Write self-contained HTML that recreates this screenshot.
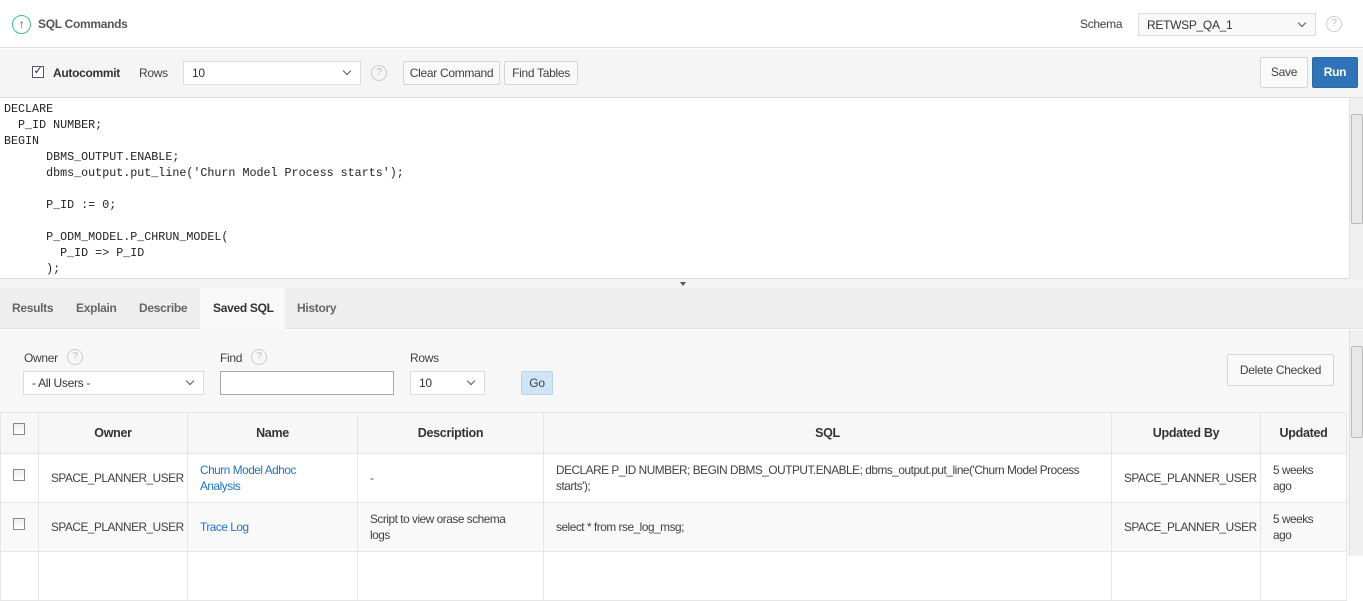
<!DOCTYPE html>
<html><head><meta charset="utf-8"><style>
*{box-sizing:border-box;margin:0;padding:0}
body{width:1363px;height:556px;overflow:hidden;background:#fff;font-family:"Liberation Sans",sans-serif;font-size:12px;color:#404040;letter-spacing:-0.3px;position:relative}
.a{position:absolute}
.sel{position:absolute;background:#f9f9f9;border:1px solid #dcdcdc;padding-left:8px;line-height:22px;color:#333}
.sel:after{content:"";position:absolute;right:10px;top:6px;width:5px;height:5px;border-right:1px solid #555;border-bottom:1px solid #555;transform:rotate(45deg)}
.btn{position:absolute;background:#f9f9f9;border:1px solid #d6d6d6;text-align:center;color:#404040;border-radius:2px}
.help{position:absolute;width:16px;height:16px;border:1px solid #ccc;border-radius:50%;color:#bbb;font-size:10px;text-align:center;line-height:14px}
pre{font-family:"Liberation Mono",monospace;font-size:11.7px;line-height:16px;color:#222;letter-spacing:0}
.cb{position:absolute;width:12px;height:12px;border:1px solid #888;background:linear-gradient(#eee,#fff)}
table{position:absolute;left:0;top:412px;width:1346px;border-collapse:collapse;table-layout:fixed}
td,th{border:1px solid #e6e6e6;padding:0 12px;text-align:left;vertical-align:middle;line-height:16px;white-space:nowrap}
td{font-size:11.8px;letter-spacing:-0.45px}
th{height:41px;text-align:center;font-weight:bold;color:#333;background:#f7f7f7;font-size:12.5px}
td{height:49px}
a{color:#1a73c9;text-decoration:none}
.vs{position:absolute;right:0;width:14px;background:#f0f0f0;border-left:1px solid #e0e0e0}
.thumb{position:absolute;left:1px;width:12px;background:#e8e8e8;border:1px solid #bbb;border-radius:2px}
</style></head><body>
<div class="a" style="left:0;top:0;width:1363px;height:48px;border-bottom:1px solid #ddd"></div>
<div class="a" style="left:12px;top:15px;width:19px;height:19px;border:1.5px solid #3cc48c;border-radius:50%;color:#555;text-align:center;line-height:16px;font-size:12px">↑</div>
<div class="a" style="left:38px;top:17px;font-weight:bold;color:#555">SQL Commands</div>
<div class="a" style="left:1080px;top:17px">Schema</div>
<div class="sel" style="left:1138px;top:13px;width:178px;height:23px">RETWSP_QA_1</div>
<div class="help" style="left:1326px;top:16px">?</div>

<div class="a" style="left:0;top:49px;width:1363px;height:49px;background:#f5f5f5;border-bottom:1px solid #ddd"></div>
<div class="cb" style="left:32px;top:66px;background:#fff;border-color:#557;font-size:11px;line-height:9px;text-align:center;color:#223">✓</div>
<div class="a" style="left:53px;top:66px;font-weight:bold;color:#333">Autocommit</div>
<div class="a" style="left:139px;top:66px">Rows</div>
<div class="sel" style="left:183px;top:61px;width:178px;height:24px;background:#fff">10</div>
<div class="help" style="left:371px;top:65px">?</div>
<div class="btn" style="left:403px;top:61px;width:97px;height:24px;line-height:22px">Clear Command</div>
<div class="btn" style="left:504px;top:61px;width:74px;height:24px;line-height:22px">Find Tables</div>
<div class="btn" style="left:1260px;top:57px;width:48px;height:31px;line-height:29px;background:#fafafa">Save</div>
<div class="btn" style="left:1312px;top:57px;width:46px;height:31px;line-height:29px;background:#2f74b8;border-color:#2a6aa8;color:#fff;font-weight:bold">Run</div>

<div class="a" style="left:0;top:98px;width:1363px;height:181px;background:#fff;border-bottom:1px solid #ddd"></div>
<pre class="a" style="left:4px;top:101px">DECLARE
  P_ID NUMBER;
BEGIN
      DBMS_OUTPUT.ENABLE;
      dbms_output.put_line('Churn Model Process starts');

      P_ID := 0;

      P_ODM_MODEL.P_CHRUN_MODEL(
        P_ID => P_ID
      );</pre>
<div class="vs" style="top:98px;height:181px"><div class="thumb" style="top:16px;height:110px"></div></div>
<div class="a" style="left:0;top:279px;width:1363px;height:9px;background:#f3f3f3"></div>
<div class="a" style="left:680px;top:282px;border-left:3px solid transparent;border-right:3px solid transparent;border-top:4px solid #555"></div>

<div class="a" style="left:0;top:288px;width:1363px;height:41px;background:#eeeeee;border-bottom:1px solid #e2e2e2"></div>
<div class="a" style="left:200px;top:288px;width:85px;height:42px;background:#f8f8f8"></div>
<div class="a" style="left:12px;top:301px;font-weight:bold;color:#666">Results</div>
<div class="a" style="left:76px;top:301px;font-weight:bold;color:#666">Explain</div>
<div class="a" style="left:139px;top:301px;font-weight:bold;color:#666">Describe</div>
<div class="a" style="left:213px;top:301px;font-weight:bold;color:#333">Saved SQL</div>
<div class="a" style="left:297px;top:301px;font-weight:bold;color:#666">History</div>

<div class="a" style="left:0;top:330px;width:1349px;height:226px;background:#f7f7f7"></div>
<div class="a" style="left:24px;top:351px">Owner</div><div class="help" style="left:67px;top:349px">?</div>
<div class="sel" style="left:23px;top:371px;width:181px;height:24px;background:#fff">- All Users -</div>
<div class="a" style="left:220px;top:351px">Find</div><div class="help" style="left:251px;top:349px">?</div>
<div class="a" style="left:220px;top:371px;width:174px;height:24px;background:#fff;border:1px solid #aaa"></div>
<div class="a" style="left:410px;top:351px">Rows</div>
<div class="sel" style="left:410px;top:371px;width:75px;height:24px;background:#fff">10</div>
<div class="btn" style="left:521px;top:371px;width:32px;height:24px;line-height:22px;background:#cfe4f7;border-color:#b9d3ec">Go</div>
<div class="btn" style="left:1227px;top:354px;width:107px;height:32px;line-height:30px">Delete Checked</div>

<table>
<colgroup><col style="width:38px"><col style="width:149px"><col style="width:170px"><col style="width:186px"><col style="width:568px"><col style="width:149px"><col style="width:86px"></colgroup>
<tr><th style="padding:0"><div class="cb" style="position:relative;margin:-8px 0 0 12px"></div></th><th>Owner</th><th>Name</th><th>Description</th><th>SQL</th><th>Updated By</th><th>Updated</th></tr>
<tr style="background:#fff"><td style="padding:0"><div class="cb" style="position:relative;margin:-6px 0 0 12px"></div></td><td>SPACE_PLANNER_USER</td><td><a>Churn Model Adhoc<br>Analysis</a></td><td>-</td><td>DECLARE P_ID NUMBER; BEGIN DBMS_OUTPUT.ENABLE; dbms_output.put_line('Churn Model Process<br>starts');</td><td>SPACE_PLANNER_USER</td><td>5 weeks<br>ago</td></tr>
<tr style="background:#f9f9f9"><td style="padding:0"><div class="cb" style="position:relative;margin:-6px 0 0 12px"></div></td><td>SPACE_PLANNER_USER</td><td><a>Trace Log</a></td><td>Script to view orase schema<br>logs</td><td>select * from rse_log_msg;</td><td>SPACE_PLANNER_USER</td><td>5 weeks<br>ago</td></tr>
<tr style="background:#fff"><td></td><td></td><td></td><td></td><td></td><td></td><td></td></tr>
</table>
<div class="vs" style="top:330px;height:226px;background:#f0f0f0"><div class="thumb" style="top:16px;height:92px"></div></div>
</body></html>
